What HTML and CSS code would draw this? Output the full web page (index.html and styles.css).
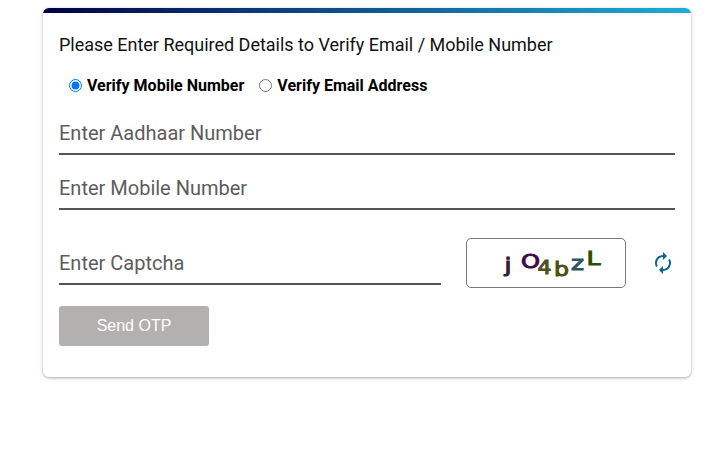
FILE: index.html
```html
<!DOCTYPE html>
<html lang="en">
<head>
<meta charset="utf-8">
<title>Verify Email / Mobile Number</title>
<link rel="stylesheet" href="styles.css">
</head>
<body>
<main class="card">
  <div class="card-bar"></div>
  <form class="card-body">
    <h1 class="title">Please Enter Required Details to Verify Email / Mobile Number</h1>
    <div class="options">
      <label class="option"><input type="radio" name="mode" checked><span>Verify Mobile Number</span></label>
      <label class="option"><input type="radio" name="mode"><span>Verify Email Address</span></label>
    </div>
    <input class="field" type="text" placeholder="Enter Aadhaar Number">
    <input class="field field-mobile" type="text" placeholder="Enter Mobile Number">
    <div class="captcha-row">
      <input class="field field-captcha" type="text" placeholder="Enter Captcha">
      <div class="captcha">
        <svg width="158" height="48" viewBox="467 239 158 48" font-family="'DejaVu Sans', sans-serif" font-size="20" stroke-width="1">
          <text x="504.5" y="272" fill="#30202e" stroke="#30202e" textLength="7" lengthAdjust="spacingAndGlyphs">j</text>
          <text x="521" y="267.5" fill="#42064f" stroke="#42064f" textLength="19" lengthAdjust="spacingAndGlyphs">O</text>
          <text x="537.5" y="273.5" fill="#4b5120" stroke="#4b5120" textLength="14" lengthAdjust="spacingAndGlyphs">4</text>
          <text x="554" y="276" fill="#4c5210" stroke="#4c5210" textLength="15" lengthAdjust="spacingAndGlyphs">b</text>
          <text x="571" y="269.5" fill="#2c5660" stroke="#2c5660" textLength="13" lengthAdjust="spacingAndGlyphs">z</text>
          <text x="586.5" y="264.5" fill="#244d08" stroke="#244d08" textLength="14" lengthAdjust="spacingAndGlyphs">L</text>
        </svg>
      </div>
      <button class="refresh" type="button" aria-label="Refresh captcha">
        <svg width="24" height="24" viewBox="0 0 24 24"><path fill="currentColor" d="M12 6v3l4-4-4-4v3c-4.42 0-8 3.58-8 8 0 1.57.46 3.03 1.24 4.26L6.7 14.8c-.45-.83-.7-1.79-.7-2.8 0-3.31 2.69-6 6-6zm6.76 1.74L17.3 9.2c.44.84.7 1.79.7 2.8 0 3.31-2.69 6-6 6v-3l-4 4 4 4v-3c4.42 0 8-3.58 8-8 0-1.57-.46-3.03-1.24-4.26z"/></svg>
      </button>
    </div>
    <button class="submit" type="button">Send OTP</button>
  </form>
</main>
</body>
</html>
```
FILE: styles.css
```css
* { box-sizing: border-box; }

body {
  min-height: 471px;
  margin: 0;
  padding: 8px 0 0 43px;
  background: #fff;
  font-family: Roboto, sans-serif;
}

.card {
  width: 648px;
  height: 369px;
  border-radius: 6px;
  background: #fff;
  overflow: hidden;
  box-shadow: 0 1px 4px rgba(0, 0, 0, .2), 0 1px 2px rgba(0, 0, 0, .16);
}

.card-bar {
  height: 5px;
  background: linear-gradient(90deg, #020048, #1fadd8);
}

.card-body { padding: 20px 16px 0; }

.title {
  margin: 0;
  font-size: 18px;
  font-weight: 400;
  line-height: 24px;
  letter-spacing: -.01px;
  color: #111;
  white-space: nowrap;
}

.options {
  display: flex;
  gap: 15px;
  height: 20px;
  margin: 19px 0 0 10px;
}

.option {
  display: flex;
  align-items: center;
  gap: 5px;
  font-size: 16px;
  font-weight: 700;
  line-height: 20px;
  color: #000;
  white-space: nowrap;
}

.option input { width: 13px; height: 13px; margin: 0 0 1px; }

.field {
  display: block;
  width: 100%;
  height: 44px;
  margin: 15px 0 0;
  padding: 2px 0 0;
  border: 0;
  border-bottom: 2px solid #555;
  border-radius: 0;
  outline: 0;
  background: transparent;
  font: 400 20px Roboto, sans-serif;
}

.field::placeholder { color: #5c5c5c; opacity: 1; }

.field-mobile { margin-top: 11px; }

.captcha-row {
  display: flex;
  align-items: center;
  height: 50px;
  margin-top: 28px;
}

.field-captcha {
  width: 382px;
  margin: 0 25px 0 0;
}

.captcha {
  width: 160px;
  height: 50px;
  border: 1px solid #777;
  border-radius: 5px;
}

.captcha svg { display: block; }

.refresh {
  display: flex;
  margin: 0 0 0 25px;
  padding: 0;
  border: 0;
  background: none;
  color: #0b6394;
}

.submit {
  display: block;
  width: 150px;
  height: 40px;
  margin-top: 18px;
  padding: 0;
  border: 0;
  border-radius: 3px;
  background: #b3b0b0;
  color: #fff;
  font: 16px "Liberation Sans", Arial, sans-serif;
}
```
